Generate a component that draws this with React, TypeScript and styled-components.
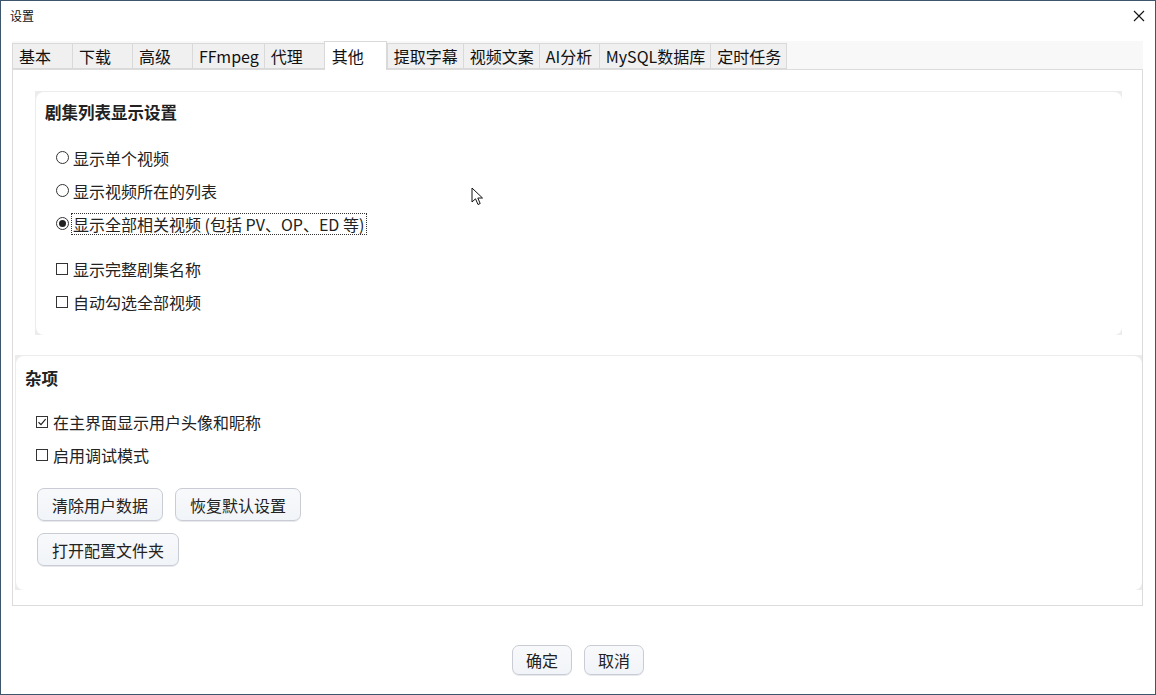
import React from "react";
import styled, { createGlobalStyle } from "styled-components";

const GlobalStyle = createGlobalStyle`
  html, body {
    margin: 0;
    padding: 0;
    background: #ffffff;
  }
  * {
    box-sizing: border-box;
  }
  body {
    font-family: "Noto Sans CJK SC", "Noto Sans", sans-serif;
    color: #1f1f1f;
  }
`;

const Window = styled.div`
  position: relative;
  width: 1156px;
  height: 695px;
  border: 1px solid #3e566b;
  background: #ffffff;
  display: flex;
  flex-direction: column;
`;

const TitleBar = styled.div`
  height: 29px;
  display: flex;
  align-items: center;
  justify-content: space-between;
  padding: 0 8px 0 9px;
  font-size: 12px;
  line-height: 14px;
  color: #111;
`;

const CloseButton = styled.div`
  width: 14px;
  height: 14px;
  display: flex;
  align-items: center;
  justify-content: center;
  margin-right: 1px;
`;

const Body = styled.div`
  padding: 11px 12px 0 11px;
  display: flex;
  flex-direction: column;
`;

const TabBar = styled.div`
  display: flex;
  align-items: flex-end;
  height: 28px;
  background: #f8f8f9;
`;

const Tab = styled.div<{ $active?: boolean }>`
  min-width: ${(p) => (p.$active ? 63 : 60)}px;
  height: ${(p) => (p.$active ? 29 : 26)}px;
  margin-bottom: ${(p) => (p.$active ? -1 : 0)}px;
  padding: 0 ${(p) => (p.$active ? 7 : 5)}px 0 ${(p) => (p.$active ? 7 : 6)}px;
  display: flex;
  align-items: center;
  font-size: 16px;
  line-height: 20px;
  background: ${(p) => (p.$active ? "#ffffff" : "#f0f0f0")};
  border: 1px solid #d9d9d9;
  border-bottom: ${(p) => (p.$active ? "none" : "1px solid #d9d9d9")};
  border-right: ${(p) => (p.$active ? "1px solid #d9d9d9" : "none")};
  color: #111;
  white-space: nowrap;
  position: relative;
  z-index: ${(p) => (p.$active ? 2 : 1)};
  &:last-child {
    border-right: 1px solid #d9d9d9;
  }
`;

const Pane = styled.div`
  height: 537px;
  border: 1px solid #dcdcdc;
  padding: 21px 0 0 2px;
  display: flex;
  flex-direction: column;
  gap: 20px;
`;

const GroupOuter = styled.div<{ $inset: number; $height: number }>`
  margin: 0 ${(p) => p.$inset}px 0 ${(p) => p.$inset}px;
  height: ${(p) => p.$height}px;
  background: #ececec;
  display: flex;
`;

const GroupInner = styled.div<{ $top: number }>`
  flex: 1;
  margin: 1px 0 0 1px;
  background: #ffffff;
  border-radius: 8px;
  padding: ${(p) => p.$top}px 0 0 9px;
  display: flex;
  flex-direction: column;
`;

const GroupTitle = styled.div`
  font-size: 16.5px;
  font-weight: 700;
  line-height: 24px;
  color: #222;
`;

const OptionList = styled.div<{ $top: number }>`
  margin-top: ${(p) => p.$top}px;
  padding-left: 11px;
  display: flex;
  flex-direction: column;
`;

const Spacer = styled.div<{ $h: number }>`
  height: ${(p) => p.$h}px;
`;

const OptionRow = styled.div`
  height: 33px;
  display: flex;
  align-items: center;
  font-size: 16px;
  line-height: 20px;
  color: #222;
`;

const RadioMark = styled.span<{ $checked?: boolean }>`
  width: 13px;
  height: 13px;
  border: 1px solid #333;
  border-radius: 50%;
  margin-right: 3px;
  display: flex;
  align-items: center;
  justify-content: center;
  &::after {
    content: "";
    display: ${(p) => (p.$checked ? "block" : "none")};
    width: 7px;
    height: 7px;
    border-radius: 50%;
    background: #222;
  }
`;

const CheckMark = styled.span`
  width: 12px;
  height: 12px;
  border: 1px solid #333;
  margin-right: 4px;
  display: flex;
  align-items: center;
  justify-content: center;
`;

const Label = styled.span<{ $focused?: boolean }>`
  padding: 0 2px 0 1px;
  outline: ${(p) => (p.$focused ? "1px dotted #333" : "none")};
  outline-offset: 0;
`;

const ButtonGrid = styled.div`
  margin-top: 17px;
  padding-left: 12px;
  display: flex;
  flex-direction: column;
  gap: 12px;
`;

const ButtonRow = styled.div<{ $center?: boolean }>`
  display: flex;
  gap: 12px;
  justify-content: ${(p) => (p.$center ? "center" : "flex-start")};
`;

const Button = styled.button<{ $w: number; $h?: number }>`
  width: ${(p) => p.$w}px;
  height: ${(p) => p.$h ?? 33}px;
  border: 1px solid #c9ccd4;
  border-radius: 7px;
  background: linear-gradient(#f8f9fb, #f1f4f8);
  font-family: "Noto Sans CJK SC", "Noto Sans", sans-serif;
  font-size: 16px;
  line-height: 20px;
  color: #222;
  padding: 0;
  box-shadow: 0 1px 0 #e6e8ec;
`;

const Footer = styled.div`
  margin-top: 39px;
`;

const Cursor = styled.svg`
  position: absolute;
  left: 470px;
  top: 186px;
`;

const tabs = [
  "基本",
  "下载",
  "高级",
  "FFmpeg",
  "代理",
  "其他",
  "提取字幕",
  "视频文案",
  "AI分析",
  "MySQL数据库",
  "定时任务",
];

const Check = ({ checked }: { checked?: boolean }) => (
  <CheckMark>
    {checked && (
      <svg width="10" height="10" viewBox="0 0 10 10">
        <path d="M1.5 5.2 L4 7.6 L8.6 2.2" fill="none" stroke="#222" strokeWidth="1.2" />
      </svg>
    )}
  </CheckMark>
);

const App = () => {
  return (
    <>
      <GlobalStyle />
      <Window>
        <TitleBar>
          <span>设置</span>
          <CloseButton>
            <svg width="12" height="12" viewBox="0 0 12 12">
              <path d="M1 1 L11 11 M11 1 L1 11" stroke="#111" strokeWidth="1.1" />
            </svg>
          </CloseButton>
        </TitleBar>
        <Body>
          <TabBar>
            {tabs.map((t) => (
              <Tab key={t} $active={t === "其他"}>
                {t}
              </Tab>
            ))}
          </TabBar>
          <Pane>
            <GroupOuter $inset={20} $height={244}>
              <GroupInner $top={8}>
                <GroupTitle>剧集列表显示设置</GroupTitle>
                <OptionList $top={17}>
                  <OptionRow>
                    <RadioMark />
                    <Label>显示单个视频</Label>
                  </OptionRow>
                  <OptionRow>
                    <RadioMark />
                    <Label>显示视频所在的列表</Label>
                  </OptionRow>
                  <OptionRow>
                    <RadioMark $checked />
                    <Label $focused>显示全部相关视频 (包括 PV、OP、ED 等)</Label>
                  </OptionRow>
                  <Spacer $h={12} />
                  <OptionRow>
                    <Check />
                    <Label>显示完整剧集名称</Label>
                  </OptionRow>
                  <OptionRow>
                    <Check />
                    <Label>自动勾选全部视频</Label>
                  </OptionRow>
                </OptionList>
              </GroupInner>
            </GroupOuter>
            <GroupOuter $inset={0} $height={235}>
              <GroupInner $top={10}>
                <GroupTitle>杂项</GroupTitle>
                <OptionList $top={15}>
                  <OptionRow>
                    <Check checked />
                    <Label>在主界面显示用户头像和昵称</Label>
                  </OptionRow>
                  <OptionRow>
                    <Check />
                    <Label>启用调试模式</Label>
                  </OptionRow>
                </OptionList>
                <ButtonGrid>
                  <ButtonRow>
                    <Button $w={126}>清除用户数据</Button>
                    <Button $w={126}>恢复默认设置</Button>
                  </ButtonRow>
                  <ButtonRow>
                    <Button $w={142}>打开配置文件夹</Button>
                  </ButtonRow>
                </ButtonGrid>
              </GroupInner>
            </GroupOuter>
          </Pane>
        </Body>
        <Footer>
          <ButtonRow $center>
            <Button $w={60} $h={30}>确定</Button>
            <Button $w={60} $h={30}>取消</Button>
          </ButtonRow>
        </Footer>
        <Cursor width="14" height="20" viewBox="0 0 14 20">
          <path
            d="M1 1 L1 15 L4.5 11.8 L7 17.5 L9.2 16.5 L6.8 11 L11.5 11 Z"
            fill="#ffffff"
            stroke="#111"
            strokeWidth="1"
            strokeLinejoin="round"
          />
        </Cursor>
      </Window>
    </>
  );
};

export default App;
